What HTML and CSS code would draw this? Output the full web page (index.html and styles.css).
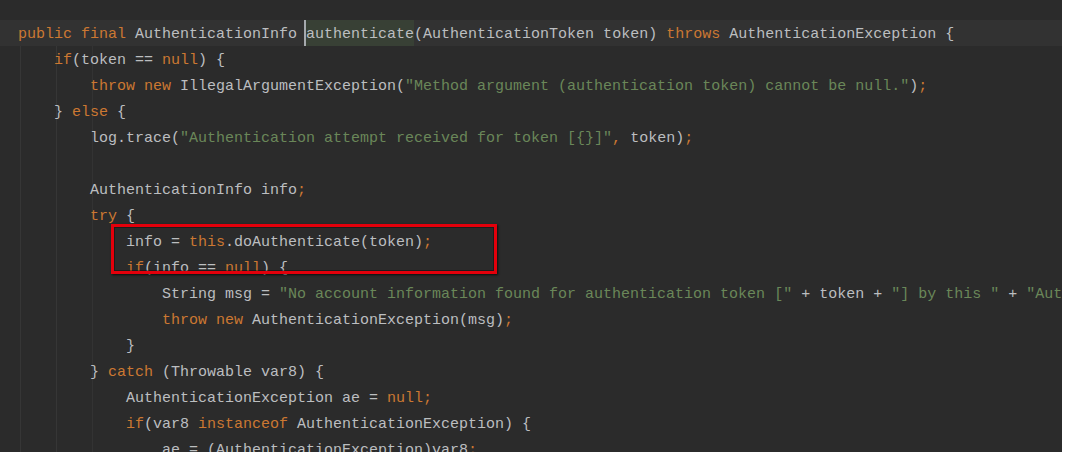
FILE: index.html
```html
<!DOCTYPE html>
<html lang="en">
<head>
    <meta charset="UTF-8">
    <title>Editor</title>
    <link rel="stylesheet" href="styles.css">
</head>
<body>
    <div class="page">
        <div class="editor">
            <div class="line current"><span class="k">public final</span> AuthenticationInfo <span class="caret"></span><span class="hl">authenticate</span>(AuthenticationToken token) <span class="k">throws</span> AuthenticationException {</div>
            <div class="line">    <span class="k">if</span>(token == <span class="k">null</span>) {</div>
            <div class="line">        <span class="k">throw new</span> IllegalArgumentException(<span class="s">"Method argument (authentication token) cannot be null."</span>)<span class="k">;</span></div>
            <div class="line">    } <span class="k">else</span> {</div>
            <div class="line">        log.trace(<span class="s">"Authentication attempt received for token [{}]"</span><span class="k">,</span> token)<span class="k">;</span></div>
            <div class="line"> </div>
            <div class="line">        AuthenticationInfo info<span class="k">;</span></div>
            <div class="line">        <span class="k">try</span> {</div>
            <div class="line">            info = <span class="k">this</span>.doAuthenticate(token)<span class="k">;</span></div>
            <div class="line">            <span class="k">if</span>(info == <span class="k">null</span>) {</div>
            <div class="line">                String msg = <span class="s">"No account information found for authentication token ["</span> + token + <span class="s">"] by this "</span> + <span class="s">"Authenticator instance.  Please check that it is configured correctly."</span><span class="k">;</span></div>
            <div class="line">                <span class="k">throw new</span> AuthenticationException(msg)<span class="k">;</span></div>
            <div class="line">            }</div>
            <div class="line">        } <span class="k">catch</span> (Throwable var8) {</div>
            <div class="line">            AuthenticationException ae = <span class="k">null;</span></div>
            <div class="line">            <span class="k">if</span>(var8 <span class="k">instanceof</span> AuthenticationException) {</div>
            <div class="line">                ae = (AuthenticationException)var8<span class="k">;</span></div>
            <div class="mark"></div>
        </div>
        <div class="side"></div>
    </div>
</body>
</html>
```

FILE: styles.css
```css
html, body {
    margin: 0;
    height: 100%;
    overflow: hidden;
}
.page {
    display: flex;
    height: 452px;
    background-color: #ffffff;
}
.editor {
    position: relative;
    width: 1062px;
    flex: none;
    padding-top: 20px;
    box-sizing: border-box;
    overflow: hidden;
    background-color: #2b2b2b;
    background-image:
        linear-gradient(#2b2b2b, #2b2b2b),
        linear-gradient(to right, transparent 20px, #363636 20px, #363636 21px, transparent 21px,
            transparent 56px, #363636 56px, #363636 57px, transparent 57px,
            transparent 92px, #333333 92px, #333333 93px, transparent 93px);
    background-size: 100% 46px, 100% 100%;
    background-repeat: no-repeat;
    font-family: "Liberation Mono", monospace;
    font-size: 15px;
    color: #bcbec0;
}
.side {
    flex: 1;
    background-color: #ffffff;
}
.line {
    height: 26px;
    line-height: 30px;
    padding-left: 18px;
    white-space: pre;
}
.current {
    background-color: #323232;
}
.k {
    color: #cc7832;
}
.s {
    color: #6a8759;
}
.hl {
    display: inline-block;
    height: 26px;
    line-height: 30px;
    vertical-align: top;
    background-color: #384035;
}
.caret {
    display: inline-block;
    width: 2px;
    height: 26px;
    margin-left: -2px;
    vertical-align: top;
    background-color: #a5a9ad;
}
/* red annotation box drawn over the code */
.mark {
    position: absolute;
    left: 111px;
    top: 224px;
    width: 386px;
    height: 50px;
    box-sizing: border-box;
    border: 3px solid #e3000b;
    box-shadow: 1px 1px 2px rgba(0, 0, 0, 0.7), inset 0 0 0 1px rgba(0, 0, 0, 0.35);
}
```
